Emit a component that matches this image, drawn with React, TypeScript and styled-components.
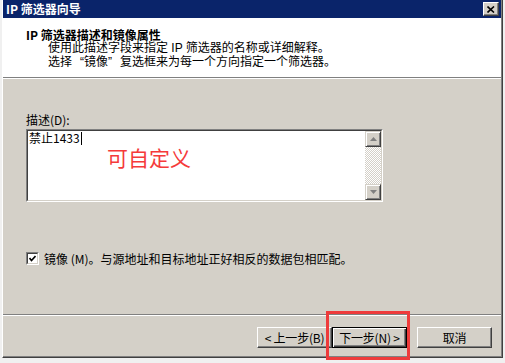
import React from "react";
import styled, { createGlobalStyle } from "styled-components";

const Global = createGlobalStyle`
  html, body { margin: 0; padding: 0; background: #f0f0f0; }
  body { font-family: "Noto Sans CJK SC", "Noto Sans", sans-serif; font-size: 12px; color: #000; }
  #root { width: 505px; height: 363px; position: relative; overflow: hidden; }
`;

const Page = styled.div`
  position: relative;
  width: 505px;
  height: 363px;
  padding-left: 2px;
  box-sizing: border-box;
`;

const Window = styled.div`
  width: 501px;
  height: 358px;
  box-sizing: border-box;
  background: #d4d0c8;
  border-left: 1px solid #ffffff;
  border-right: 1px solid #404040;
  border-bottom: 1px solid #404040;
  display: flex;
  flex-direction: column;
`;

const Inner = styled.div`
  flex: 1;
  display: flex;
  flex-direction: column;
  border-right: 1px solid #808080;
  border-bottom: 1px solid #808080;
`;

const TitleBar = styled.div`
  height: 18px;
  background: #0a246a;
  display: flex;
  align-items: center;
  justify-content: space-between;
  padding: 0 2px 0 3px;
  flex-shrink: 0;
`;

const TitleText = styled.span`
  color: #ffffff;
  font-weight: 700;
  font-size: 12px;
  line-height: 14px;
`;

const CloseButton = styled.div`
  width: 16px;
  height: 14px;
  box-sizing: border-box;
  background: #d4d0c8;
  border-top: 1px solid #ffffff;
  border-left: 1px solid #ffffff;
  border-right: 1px solid #404040;
  border-bottom: 1px solid #404040;
  box-shadow: inset -1px -1px 0 #808080;
  display: flex;
  align-items: center;
  justify-content: center;
`;

const Header = styled.div`
  background: #ffffff;
  border-bottom: 1px solid #808080;
  box-shadow: 0 1px 0 #ffffff;
  margin-bottom: 1px;
  padding: 10px 0 0 23px;
  box-sizing: border-box;
  height: 60px;
  flex-shrink: 0;
`;

const HeaderTitle = styled.div`
  font-weight: 700;
  font-size: 12px;
  line-height: 13px;
`;

const HeaderSub = styled.div`
  margin-left: 22px;
  font-family: "Liberation Sans", "Noto Sans CJK SC", sans-serif;
  font-size: 12px;
  line-height: 14px;
`;

const Quote = styled.span<{ $open?: boolean }>`
  margin-left: ${(p) => (p.$open ? 8 : 0)}px;
  margin-right: ${(p) => (p.$open ? 0 : 8)}px;
`;

const Body = styled.div`
  flex: 1;
  padding: 34px 0 0 23px;
  display: flex;
  flex-direction: column;
`;

const Label = styled.div`
  font-size: 12px;
  line-height: 14px;
  margin-bottom: 2px;
`;

const TextBox = styled.div`
  position: relative;
  width: 357px;
  height: 73px;
  box-sizing: border-box;
  border-top: 1px solid #808080;
  border-left: 1px solid #808080;
  border-right: 1px solid #ffffff;
  border-bottom: 1px solid #ffffff;
`;

const TextInner = styled.div`
  height: 100%;
  box-sizing: border-box;
  border-top: 1px solid #404040;
  border-left: 1px solid #404040;
  border-right: 1px solid #d4d0c8;
  border-bottom: 1px solid #d4d0c8;
  background: #ffffff;
  display: flex;
`;

const TextContent = styled.div`
  flex: 1;
  padding: 0 0 0 1px;
  font-size: 12px;
  line-height: 14px;
  display: flex;
  align-items: flex-start;
`;

const Caret = styled.span`
  display: inline-block;
  width: 1px;
  height: 13px;
  background: #000;
  margin-left: 1px;
  margin-top: 1px;
`;

const Annotation = styled.div`
  position: absolute;
  left: 80px;
  top: 16px;
  color: #f53a3a;
  font-size: 21px;
  line-height: 22px;
`;

const ScrollBar = styled.div`
  width: 16px;
  display: flex;
  flex-direction: column;
`;

const ScrollBtn = styled.div`
  width: 16px;
  height: 16px;
  box-sizing: border-box;
  background: #d4d0c8;
  border-top: 1px solid #d4d0c8;
  border-left: 1px solid #d4d0c8;
  border-right: 1px solid #404040;
  border-bottom: 1px solid #404040;
  box-shadow: inset 1px 1px 0 #ffffff, inset -1px -1px 0 #808080;
  display: flex;
  align-items: center;
  justify-content: center;
`;

const Track = styled.div`
  flex: 1;
  background: repeating-conic-gradient(#d4d0c8 0 25%, #ffffff 0 50%) 0 0 / 2px 2px;
`;

const CheckRow = styled.div`
  margin-top: 50px;
  display: flex;
  align-items: center;
  height: 13px;
`;

const CheckBox = styled.div`
  width: 13px;
  height: 13px;
  box-sizing: border-box;
  border-top: 1px solid #808080;
  border-left: 1px solid #808080;
  border-right: 1px solid #ffffff;
  border-bottom: 1px solid #ffffff;
  margin-right: 5px;
  flex-shrink: 0;
`;

const CheckInner = styled.div`
  width: 100%;
  height: 100%;
  box-sizing: border-box;
  border-top: 1px solid #404040;
  border-left: 1px solid #404040;
  border-right: 1px solid #d4d0c8;
  border-bottom: 1px solid #d4d0c8;
  background: #fff;
  display: flex;
  align-items: center;
  justify-content: center;
`;

const CheckLabel = styled.span`
  font-size: 12px;
  line-height: 13px;
`;

const Divider = styled.div`
  height: 1px;
  background: #808080;
  box-shadow: 0 1px 0 #ffffff;
  margin-bottom: 1px;
  flex-shrink: 0;
`;

const ButtonRow = styled.div`
  height: 40px;
  display: flex;
  justify-content: flex-end;
  align-items: flex-start;
  padding: 11px 9px 0 0;
  box-sizing: border-box;
`;

const Button = styled.div<{ $primary?: boolean; $gap?: number }>`
  width: 75px;
  height: 21px;
  box-sizing: border-box;
  margin-left: ${(p) => p.$gap ?? 0}px;
  background: #d4d0c8;
  border: 1px solid;
  border-top-color: ${(p) => (p.$primary ? "#000" : "#ffffff")};
  border-left-color: ${(p) => (p.$primary ? "#000" : "#ffffff")};
  border-right-color: ${(p) => (p.$primary ? "#000" : "#404040")};
  border-bottom-color: ${(p) => (p.$primary ? "#000" : "#404040")};
  box-shadow: ${(p) =>
    p.$primary
      ? "inset 1px 1px 0 #ffffff, inset -1px -1px 0 #404040, inset -2px -2px 0 #808080"
      : "inset -1px -1px 0 #808080"};
  display: flex;
  align-items: center;
  justify-content: center;
  font-size: 12px;
  line-height: 14px;
  letter-spacing: -0.2px;
  white-space: pre;
`;

const RedFrame = styled.div`
  position: absolute;
  left: 326px;
  top: 311px;
  width: 84px;
  height: 49px;
  box-sizing: border-box;
  border: 3px solid #ee3b3b;
  pointer-events: none;
`;

export default function App() {
  return (
    <>
      <Global />
      <Page>
        <Window>
          <Inner>
            <TitleBar>
              <TitleText>IP 筛选器向导</TitleText>
              <CloseButton>
                <svg width="8" height="7" viewBox="0 0 8 7">
                  <path d="M0.5 0.5 L7 6.5 M7 0.5 L0.5 6.5" stroke="#000" strokeWidth="1.6" fill="none" />
                </svg>
              </CloseButton>
            </TitleBar>
            <Header>
              <HeaderTitle>IP 筛选器描述和镜像属性</HeaderTitle>
              <HeaderSub>
                使用此描述字段来指定 IP 筛选器的名称或详细解释。
                <br />
                选择<Quote $open>“</Quote>镜像<Quote>”</Quote>复选框来为每一个方向指定一个筛选器。
              </HeaderSub>
            </Header>
            <Body>
              <Label>描述(D):</Label>
              <TextBox>
                <TextInner>
                  <TextContent>
                    禁止1433<Caret />
                  </TextContent>
                  <ScrollBar>
                    <ScrollBtn>
                      <svg width="7" height="4" viewBox="0 0 7 4">
                        <path d="M3.5 0 L7 4 L0 4 Z" fill="#808080" />
                      </svg>
                    </ScrollBtn>
                    <Track />
                    <ScrollBtn>
                      <svg width="7" height="4" viewBox="0 0 7 4">
                        <path d="M0 0 L7 0 L3.5 4 Z" fill="#808080" />
                      </svg>
                    </ScrollBtn>
                  </ScrollBar>
                </TextInner>
                <Annotation>可自定义</Annotation>
              </TextBox>
              <CheckRow>
                <CheckBox>
                  <CheckInner>
                    <svg width="7" height="7" viewBox="0 0 7 7">
                      <path d="M0.5 3 L2.5 5.5 L6.5 1" stroke="#000" strokeWidth="1.6" fill="none" />
                    </svg>
                  </CheckInner>
                </CheckBox>
                <CheckLabel>镜像 (M)。与源地址和目标地址正好相反的数据包相匹配。</CheckLabel>
              </CheckRow>
            </Body>
            <Divider />
            <ButtonRow>
              <Button>{"< 上一步(B)"}</Button>
              <Button $primary>{"下一步(N) >"}</Button>
              <Button $gap={10}>取消</Button>
            </ButtonRow>
          </Inner>
        </Window>
        <RedFrame />
      </Page>
    </>
  );
}
